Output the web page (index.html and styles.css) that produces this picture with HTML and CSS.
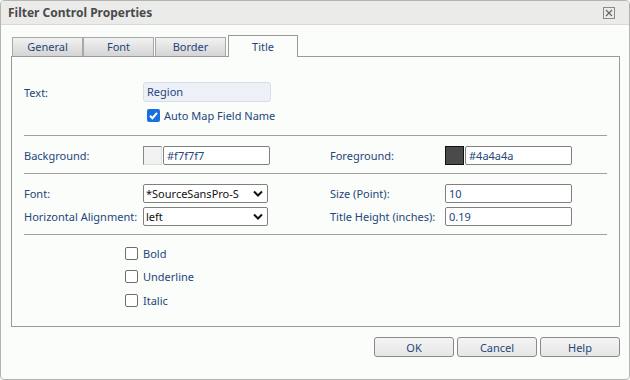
FILE: index.html
```html
<!DOCTYPE html>
<html>
<head>
<meta charset="utf-8">
<link rel="stylesheet" href="styles.css">
</head>
<body>
<div class="dialog">
  <div class="titlebar">
    <span class="title">Filter Control Properties</span>
    <span class="close"><svg width="12" height="12" viewBox="0 0 12 12"><rect x="0.5" y="0.5" width="11" height="11" fill="none" stroke="#8a8a8a"/><path d="M3 3L9 9M9 3L3 9" stroke="#6a6a6a" stroke-width="1.3"/></svg></span>
  </div>
  <div class="content">
    <div class="tabs">
      <div class="tab">General</div>
      <div class="tab">Font</div>
      <div class="tab">Border</div>
      <div class="tab active">Title</div>
    </div>
    <div class="panel">
      <div class="section s1">
        <div class="grid">
          <span class="lbl">Text:</span>
          <div class="region">Region</div>
        </div>
        <label class="chk checked auto"><span class="box"><svg width="13" height="13" viewBox="0 0 13 13"><path d="M3 6.8L5.4 9.2L10 3.8" fill="none" stroke="#fff" stroke-width="2"/></svg></span>Auto Map Field Name</label>
      </div>
      <div class="section s2">
        <div class="grid">
          <span class="lbl">Background:</span>
          <div class="color"><span class="swatch light"></span><span class="field cfield">#f7f7f7</span></div>
          <span class="lbl">Foreground:</span>
          <div class="color"><span class="swatch dark"></span><span class="field cfield">#4a4a4a</span></div>
        </div>
      </div>
      <div class="section s3">
        <div class="grid rows">
          <span class="lbl">Font:</span>
          <div class="select"><span>*SourceSansPro-S</span><svg width="10" height="7" viewBox="0 0 10 7"><path d="M1 1.5L5 5.5L9 1.5" fill="none" stroke="#111" stroke-width="2"/></svg></div>
          <span class="lbl">Size (Point):</span>
          <span class="field wide">10</span>
          <span class="lbl">Horizontal Alignment:</span>
          <div class="select"><span>left</span><svg width="10" height="7" viewBox="0 0 10 7"><path d="M1 1.5L5 5.5L9 1.5" fill="none" stroke="#111" stroke-width="2"/></svg></div>
          <span class="lbl">Title Height (inches):</span>
          <span class="field wide">0.19</span>
        </div>
      </div>
      <div class="section s4">
        <label class="chk"><span class="box"></span>Bold</label>
        <label class="chk"><span class="box"></span>Underline</label>
        <label class="chk"><span class="box"></span>Italic</label>
      </div>
    </div>
    <div class="footer">
      <button class="btn">OK</button>
      <button class="btn">Cancel</button>
      <button class="btn">Help</button>
    </div>
  </div>
</div>
</body>
</html>
```
FILE: styles.css
```css
html, body {
  margin: 0;
  padding: 0;
  background: #ffffff;
}
body {
  font-family: "Noto Sans", "DejaVu Sans", sans-serif;
  font-size: 11px;
  color: #24467a;
}
.dialog {
  width: 630px;
  height: 380px;
  box-sizing: border-box;
  border: 1px solid #b4b4b4;
  border-radius: 4px;
  background: #fbfdfb;
  overflow: hidden;
  display: flex;
  flex-direction: column;
}
.titlebar {
  height: 23px;
  flex: none;
  background: #ebecea;
  border-bottom: 1px solid #d8d9d7;
  display: flex;
  align-items: center;
  justify-content: space-between;
  padding: 0 14px 0 7px;
}
.title {
  font-weight: bold;
  font-size: 12px;
  color: #4a4a4a;
}
.close {
  display: flex;
}
.content {
  flex: 1;
  padding: 10px 8px 0 10px;
  display: flex;
  flex-direction: column;
}
.tabs {
  display: flex;
  align-items: flex-end;
  height: 21px;
  padding-left: 1px;
  position: relative;
  z-index: 1;
}
.tab {
  width: 69px;
  height: 18px;
  border: 1px solid #a8a8a8;
  border-bottom: none;
  background: linear-gradient(#f2f2f2, #d4d4d4);
  text-align: center;
  line-height: 18px;
  color: #24467a;
}
.tab:nth-child(1) { margin-right: 0; }
.tab:nth-child(2) { margin-right: 1px; }
.tab:nth-child(3) { margin-right: 2px; }
.tab.active {
  width: 68px;
  height: 21px;
  background: #fbfdfb;
  border-color: #9a9a9a;
  line-height: 22px;
  margin-bottom: -1px;
}
.panel {
  height: 269px;
  border: 1px solid #9a9a9a;
  margin-right: 1px;
  padding: 0 12px;
  display: flex;
  flex-direction: column;
}
.section {
  border-bottom: 1px solid #a0a0a0;
}
.section.s4 { border-bottom: none; }
.grid {
  display: grid;
  grid-template-columns: 119px 187px 115px 1fr;
  align-items: center;
}
.lbl { white-space: nowrap; }
.s1 { padding-top: 25px; height: 53px; }
.region {
  width: 123px;
  height: 18px;
  line-height: 18px;
  border: 1px solid #d9dce6;
  border-radius: 3px;
  background: #eef0f8;
  padding-left: 3px;
}
.chk {
  display: flex;
  align-items: center;
  height: 14px;
  gap: 4px;
}
.auto {
  margin-top: 6px;
  margin-left: 123px;
}
.box {
  width: 11px;
  height: 11px;
  border: 1px solid #6e6e6e;
  border-radius: 2px;
  background: #fff;
  display: flex;
}
.checked .box {
  width: 13px;
  height: 13px;
  border: none;
  background: #1a6fe0;
}
.s2 { padding: 10px 0 8px; }
.color { display: flex; gap: 1px; }
.swatch {
  width: 17px;
  height: 17px;
  border: 1px solid;
}
.swatch.light { background: #f2f2f2; border-color: #888 #ddd #ddd #888; }
.swatch.dark { background: #4a4a4a; border-color: #111; }
.field {
  height: 17px;
  line-height: 17px;
  border: 1px solid #808080;
  border-radius: 2px;
  background: #fff;
  padding-left: 3px;
  color: #24467a;
}
.cfield { width: 102px; }
.wide { width: 122px; }
.s3 { padding: 10px 0 8px; }
.rows { row-gap: 4px; }
.select {
  width: 117px;
  height: 17px;
  border: 1px solid #808080;
  border-radius: 2px;
  background: #fff;
  display: flex;
  align-items: center;
  justify-content: space-between;
  padding: 0 4px 0 2px;
  color: #111;
}
.s4 {
  padding: 11px 0 0 101px;
  display: flex;
  flex-direction: column;
  gap: 9.5px;
}
.s4 .chk { gap: 5px; }
.footer {
  display: flex;
  justify-content: flex-end;
  gap: 3px;
  padding: 10px 1px 0 0;
}
.btn {
  width: 80px;
  height: 20px;
  border: 1px solid #8a8a8a;
  border-radius: 3px;
  background: linear-gradient(#f4f4f4, #e6e6e6);
  font-family: inherit;
  font-size: 11px;
  color: #24467a;
  padding: 0;
}
```
